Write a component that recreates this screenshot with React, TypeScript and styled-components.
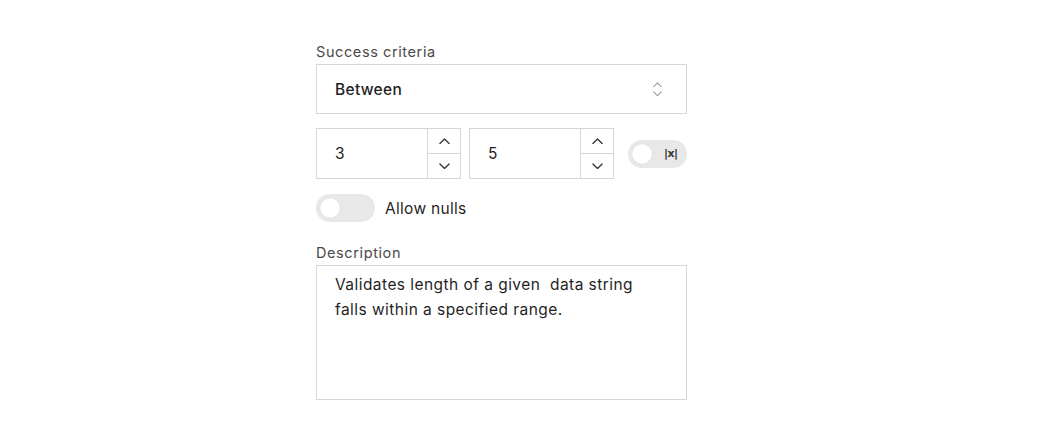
import React from "react";
import styled, { createGlobalStyle } from "styled-components";

const Global = createGlobalStyle`
  html, body { margin: 0; padding: 0; background: #fff; }
  body { font-family: Inter, "Noto Sans", sans-serif; color: #222; }
  * { box-sizing: border-box; }
`;

const Page = styled.div`
  width: 1040px;
  height: 442px;
  display: flex;
  justify-content: flex-start;
  padding-top: 40px;
  padding-left: 316px;
`;

const Form = styled.div`
  width: 371px;
  display: flex;
  flex-direction: column;
`;

const Label = styled.div`
  font-size: 14.5px;
  line-height: 20px;
  color: #4a4a4a;
  padding-top: 2px;
  margin-bottom: 2px;
  letter-spacing: 0.6px;
`;

const SelectBox = styled.div`
  height: 50px;
  border: 1px solid #d6d6d6;
  display: flex;
  align-items: center;
  justify-content: space-between;
  padding: 0 24px 0 18px;
  font-size: 15.5px;
  color: #1f1f1f;
  font-weight: 500;
  letter-spacing: 0.3px;
`;

const Row = styled.div`
  display: flex;
  align-items: center;
  margin-top: 14px;
`;

const NumberBox = styled.div`
  width: 146px;
  height: 51px;
  border: 1px solid #d6d6d6;
  display: flex;
  margin-right: 8px;
`;

const NumberValue = styled.div`
  flex: 1;
  display: flex;
  align-items: center;
  padding-left: 18px;
  font-size: 15.5px;
  color: #1f1f1f;
`;

const Spinner = styled.div`
  width: 33px;
  border-left: 1px solid #d6d6d6;
  display: flex;
  flex-direction: column;
`;

const SpinBtn = styled.div<{ $top?: boolean }>`
  flex: 1;
  display: flex;
  align-items: center;
  justify-content: center;
  border-bottom: ${(p) => (p.$top ? "1px solid #d6d6d6" : "none")};
`;

const Toggle = styled.div<{ $offset?: number }>`
  width: 59px;
  height: 28px;
  border-radius: 14px;
  background: #e8e8e8;
  display: flex;
  align-items: center;
  padding-left: 4px;
  flex-shrink: 0;
  margin-left: ${(p) => p.$offset ?? 0}px;
`;

const Knob = styled.div`
  width: 20px;
  height: 20px;
  border-radius: 50%;
  background: #fff;
  box-shadow: 0 0 1px rgba(0, 0, 0, 0.15);
`;

const ToggleText = styled.span`
  font-size: 11px;
  font-weight: 700;
  color: #333;
  margin-left: 12px;
  font-family: "DejaVu Sans", sans-serif;
  letter-spacing: -0.5px;
`;

const NullRow = styled.div`
  display: flex;
  align-items: center;
  margin-top: 15px;
`;

const NullLabel = styled.span`
  font-size: 15.5px;
  color: #1f1f1f;
  margin-left: 10px;
  letter-spacing: 0.3px;
`;

const DescLabel = styled(Label)`
  margin-top: 19px;
`;

const TextArea = styled.div`
  height: 135px;
  border: 1px solid #d6d6d6;
  padding: 6px 30px 0 18px;
  font-size: 15.5px;
  line-height: 25px;
  color: #1f1f1f;
  white-space: pre-wrap;
  letter-spacing: 0.45px;
`;

const Chevron = ({ up, color = "#333", w = 11 }: { up?: boolean; color?: string; w?: number }) => (
  <svg width={w} height={w / 2 + 1} viewBox="0 0 12 7" fill="none">
    <path
      d={up ? "M1 6 L6 1 L11 6" : "M1 1 L6 6 L11 1"}
      stroke={color}
      strokeWidth={1.4}
      strokeLinecap="round"
      strokeLinejoin="round"
    />
  </svg>
);

const UpDown = styled.div`
  display: flex;
  flex-direction: column;
  gap: 4px;
  align-items: center;
`;

const Num = ({ v }: { v: string }) => (
  <NumberBox>
    <NumberValue>{v}</NumberValue>
    <Spinner>
      <SpinBtn $top>
        <Chevron up />
      </SpinBtn>
      <SpinBtn>
        <Chevron />
      </SpinBtn>
    </Spinner>
  </NumberBox>
);

export default function App() {
  return (
    <>
      <Global />
      <Page>
        <Form>
          <Label>Success criteria</Label>
          <SelectBox>
            <span>Between</span>
            <UpDown>
              <Chevron up color="#999" w={9} />
              <Chevron color="#999" w={9} />
            </UpDown>
          </SelectBox>
          <Row>
            <Num v="3" />
            <Num v="5" />
            <Toggle $offset={6}>
              <Knob />
              <ToggleText>|x|</ToggleText>
            </Toggle>
          </Row>
          <NullRow>
            <Toggle>
              <Knob />
            </Toggle>
            <NullLabel>Allow nulls</NullLabel>
          </NullRow>
          <DescLabel>Description</DescLabel>
          <TextArea>{"Validates length of a given  data string\nfalls within a specified range."}</TextArea>
        </Form>
      </Page>
    </>
  );
}
